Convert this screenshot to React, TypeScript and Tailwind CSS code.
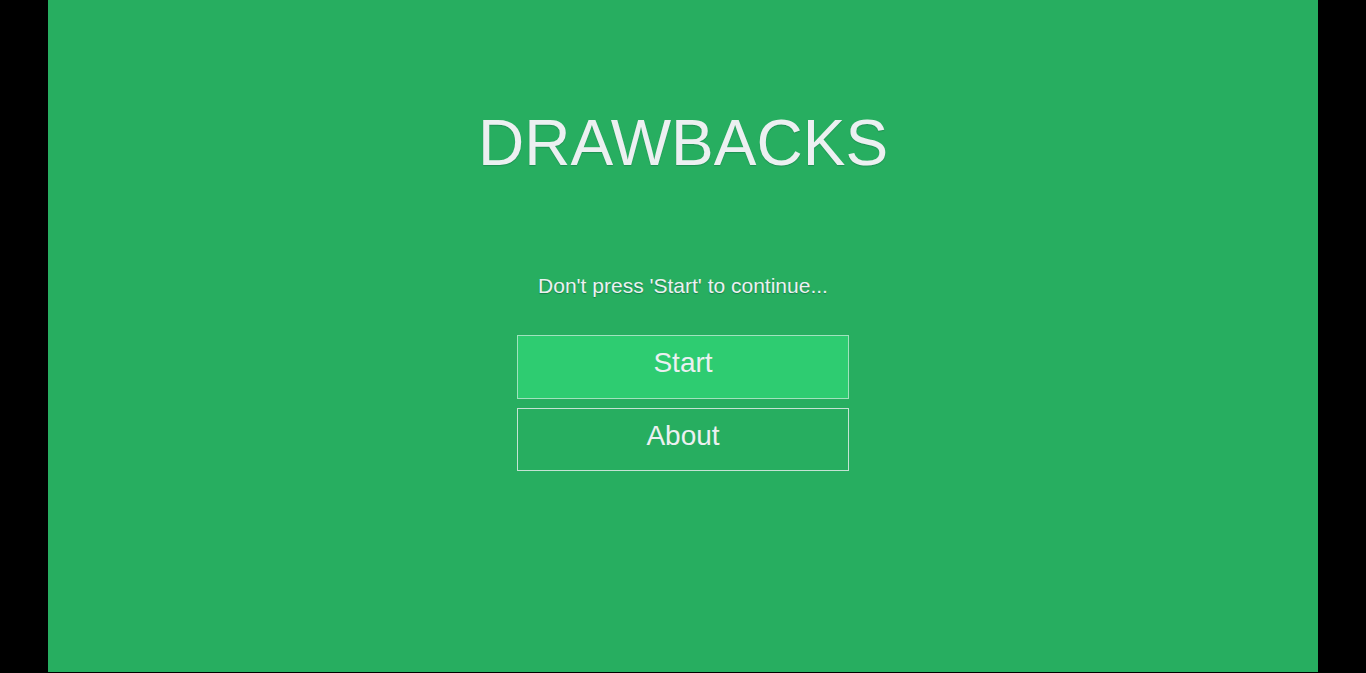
export default function App() {
  return (
    <div className="w-full h-[673px] bg-black flex justify-center">
      <main className="w-[1270px] h-[672px] bg-[#27ae60] flex flex-col items-center pt-[111px] text-[#ecf0f1] font-['Liberation_Sans',Arial,sans-serif]">
        {/* Title */}
        <h1 className="text-[64px] leading-none [text-shadow:0_1px_1px_rgba(0,60,40,0.25)]">
          DRAWBACKS
        </h1>

        <p className="mt-[100px] text-[21px] leading-none [text-shadow:0_1px_1px_rgba(0,60,40,0.4)]">
          Don't press 'Start' to continue...
        </p>

        {/* Menu */}
        <div className="mt-[39px] w-[332px] flex flex-col gap-[9px]">
          <button className="h-[64px] w-full pb-[8px] bg-[#2ecc71] border border-[rgba(236,240,241,0.6)] text-[28px] leading-none">
            Start
          </button>
          <button className="h-[63px] w-full pb-[8px] border border-[rgba(236,240,241,0.8)] text-[28px] leading-none">
            About
          </button>
        </div>
      </main>
    </div>
  );
}
